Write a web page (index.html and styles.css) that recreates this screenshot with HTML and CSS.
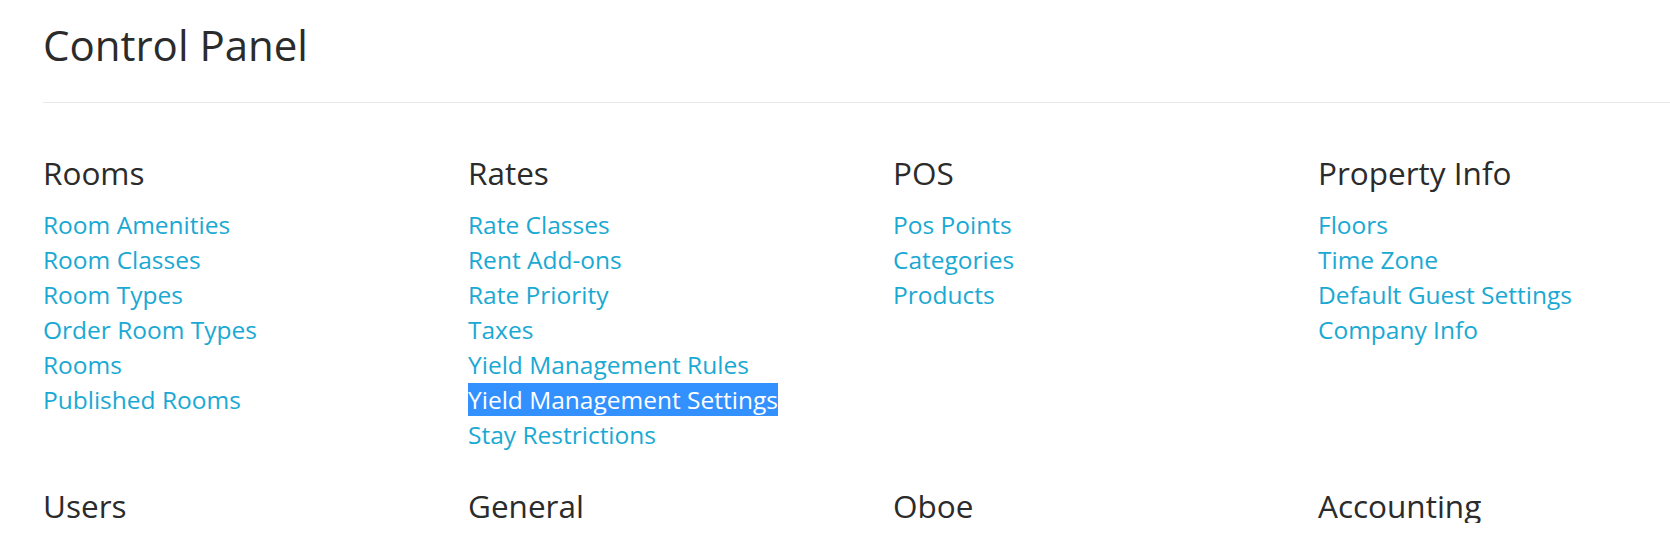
FILE: index.html
```html
<!DOCTYPE html>
<html lang="en">
<head>
<meta charset="utf-8">
<title>Control Panel</title>
<link rel="stylesheet" href="styles.css">
</head>
<body>
<div class="page">
  <h1 class="title">Control Panel</h1>
  <hr class="divider">
  <div class="grid">
    <section class="group">
      <h3 class="group-title">Rooms</h3>
      <ul class="links">
        <li><a href="#">Room Amenities</a></li>
        <li><a href="#">Room Classes</a></li>
        <li><a href="#">Room Types</a></li>
        <li><a href="#">Order Room Types</a></li>
        <li><a href="#">Rooms</a></li>
        <li><a href="#">Published Rooms</a></li>
      </ul>
    </section>
    <section class="group">
      <h3 class="group-title">Rates</h3>
      <ul class="links">
        <li><a href="#">Rate Classes</a></li>
        <li><a href="#">Rent Add-ons</a></li>
        <li><a href="#">Rate Priority</a></li>
        <li><a href="#">Taxes</a></li>
        <li><a href="#">Yield Management Rules</a></li>
        <li><a href="#" class="selected">Yield Management Settings</a></li>
        <li><a href="#">Stay Restrictions</a></li>
      </ul>
    </section>
    <section class="group">
      <h3 class="group-title">POS</h3>
      <ul class="links">
        <li><a href="#">Pos Points</a></li>
        <li><a href="#">Categories</a></li>
        <li><a href="#">Products</a></li>
      </ul>
    </section>
    <section class="group">
      <h3 class="group-title">Property Info</h3>
      <ul class="links">
        <li><a href="#">Floors</a></li>
        <li><a href="#">Time Zone</a></li>
        <li><a href="#">Default Guest Settings</a></li>
        <li><a href="#">Company Info</a></li>
      </ul>
    </section>
    <section class="group">
      <h3 class="group-title">Users</h3>
    </section>
    <section class="group">
      <h3 class="group-title">General</h3>
    </section>
    <section class="group">
      <h3 class="group-title">Oboe</h3>
    </section>
    <section class="group">
      <h3 class="group-title">Accounting</h3>
    </section>
  </div>
</div>
</body>
</html>
```

FILE: styles.css
```css
html, body {
  margin: 0;
  padding: 0;
  background: #ffffff;
  overflow: hidden;
}

body {
  font-family: "Open Sans", "Liberation Sans", sans-serif;
  color: #333333;
}

.page {
  width: 1700px;
  padding-left: 43px;
  box-sizing: border-box;
}

.title {
  margin: 0;
  padding-top: 22px;
  font-size: 42px;
  font-weight: 400;
  line-height: 46px;
  color: #2b2b2b;
}

.divider {
  margin: 34px 0 0 0;
  border: 0;
  border-top: 1px solid #e8e8e8;
  height: 0;
}

.grid {
  display: grid;
  grid-template-columns: repeat(4, 425px);
  row-gap: 36px;
  padding-top: 52px;
}

.group-title {
  margin: 0;
  font-size: 31.5px;
  font-weight: 400;
  line-height: 35px;
  color: #2b2b2b;
}

.links {
  list-style: none;
  margin: 17px 0 0 0;
  padding: 0;
}

.links li {
  font-size: 24.5px;
  line-height: 35px;
}

.links a {
  color: #1aa9d3;
  text-decoration: none;
}

.links a.selected {
  background: #3390ff;
  color: #ffffff;
}
```
